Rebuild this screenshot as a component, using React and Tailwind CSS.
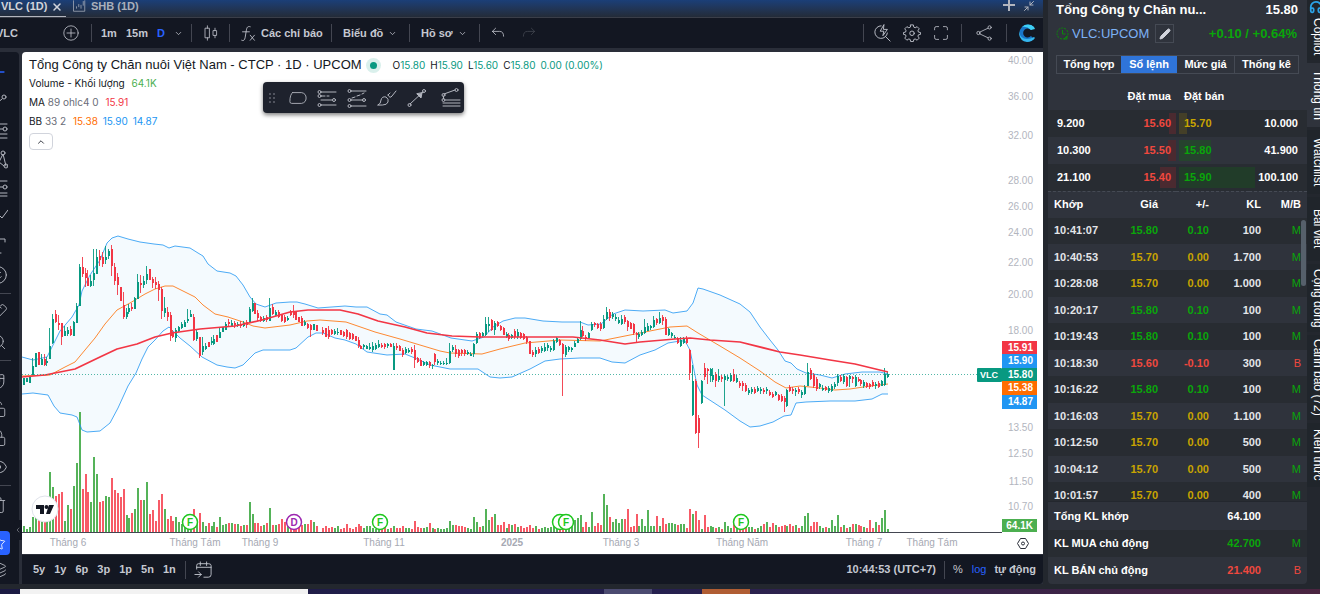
import React from 'react';
import {
  ChevronDown, ChevronUp, ChevronLeft, X, Pencil, Star, Layers, Trash2, Search,
  Ruler, Magnet, LockOpen, Smile, Eye, Lock, Minus, Minimize2, Headphones,
} from 'lucide-react';

const UP = '#089981';
const DOWN = '#f23645';

// each bar: [up, bodyTop, bodyBottom] or [up, high, bodyTop, bodyBottom, low]
const segments = [
  {
    x: 24,
    step: 2.93,
    bars: [
      [1, 378, 385], [1, 378, 382], [1, 376, 383], [1, 358, 366, 375, 375], [1, 353, 367], [0, 352, 365], [1, 354, 359, 365, 365],
      [0, 354, 359, 365, 366], [1, 357, 361, 363, 366], [1, 328, 346, 359, 359], [1, 314, 319, 343, 344], [0, 310, 314, 322, 323],
      [0, 315, 323, 325, 330], [0, 323, 323, 337, 345], [1, 326, 331, 336, 336], [1, 327, 330, 334, 336], [0, 326, 329, 335, 336],
      [1, 321, 322, 336, 336], [1, 303, 306, 323, 323], [1, 264, 267, 306, 306], [0, 257, 267, 274, 277], [0, 268, 273, 278, 287],
      [0, 270, 278, 286, 286], [1, 275, 281, 286, 287], [1, 249, 273, 280, 286], [1, 249, 257, 274, 274], [0, 250, 256, 260, 266],
      [0, 252, 257, 264, 267], [1, 246, 257, 260, 264], [1, 249, 251, 256, 259], [0, 245, 249, 266, 276], [0, 263, 267, 281, 285],
      [0, 273, 277, 285, 295], [0, 287, 301], [0, 292, 305, 317, 319], [1, 308, 312, 317, 319], [1, 304, 308, 312, 314],
      [0, 303, 307, 309, 311], [1, 297, 298, 309, 309], [1, 274, 282, 299, 299], [0, 275, 283, 285, 293], [1, 276, 281, 285, 288],
      [1, 266, 274, 280, 284], [0, 269, 280], [0, 277, 279, 283, 288], [0, 277, 282, 285, 289], [0, 281, 284, 290, 301],
      [0, 287, 289, 311, 319], [1, 297, 308, 313, 317], [0, 307, 312, 317, 321], [0, 312, 315, 336, 341], [0, 330, 332, 337, 338],
      [1, 328, 330, 338, 342], [1, 326, 327, 331, 332], [1, 322, 324, 328, 329], [1, 320, 322, 327, 327], [1, 309, 319, 321, 323],
      [1, 310, 314, 317, 317], [0, 314, 317, 340, 341], [1, 330, 332, 339, 341], [0, 337, 337, 356, 358], [1, 337, 346, 352, 355],
      [1, 343, 346, 349, 350], [0, 342, 347], [1, 337, 341, 343, 345], [1, 335, 339, 344, 345], [0, 335, 342], [1, 327, 332, 338, 338],
      [1, 327, 332], [1, 322, 324, 330, 330], [0, 319, 322, 324, 327], [1, 320, 323, 326, 326], [0, 321, 323, 325, 328],
      [1, 322, 324, 326, 327], [0, 321, 324, 326, 328], [1, 321, 323, 326, 327], [0, 320, 322, 325, 328], [1, 307, 309, 323, 323],
      [1, 298, 303, 311, 312], [0, 303, 314], [0, 310, 313, 318, 321], [0, 316, 317, 321, 322], [1, 316, 318, 321, 322],
      [0, 315, 317, 320, 322], [1, 298, 308, 321, 321], [0, 304, 307, 314, 315], [1, 310, 312, 315, 316], [0, 310, 312, 317, 318],
      [0, 314, 315, 321, 322], [0, 315, 317, 322, 323], [1, 316, 318, 320, 321], [0, 310, 311, 315, 316], [0, 305, 311, 315, 318],
      [0, 312, 320], [0, 317, 322], [0, 316, 318, 326, 326], [1, 320, 322, 325, 326], [0, 323, 324, 328, 329], [0, 324, 325, 330, 337],
      [1, 324, 330], [0, 325, 331],
    ],
    volume: [6, 3, 5, 15, 20, 22, 20, 25, 27, 60, 45, 36, 38, 40, 11, 27, 23, 46, 69, 120, 43, 58, 40, 30, 75, 58, 30, 31, 36, 35, 54, 42,
      39, 35, 43, 17, 14, 19, 23, 44, 32, 32, 50, 18, 22, 11, 32, 38, 23, 13, 16, 11, 15, 10, 8, 10, 10, 12, 23, 12, 19, 10, 6, 9, 6, 10,
      5, 15, 7, 8, 9, 9, 8, 8, 6, 7, 7, 30, 18, 9, 9, 6, 7, 9, 24, 7, 7, 8, 13, 10, 10, 8, 12, 10, 9, 7, 8, 8, 12, 10, 6],
  },
  {
    x: 323,
    step: 2.96,
    bars: [
      [0, 327, 330, 333, 335], [0, 328, 337], [0, 326, 330, 337, 339], [0, 329, 330, 334, 335], [1, 329, 331, 334, 335],
      [1, 328, 332, 333, 335], [0, 330, 335], [0, 331, 332, 336, 337], [0, 329, 330, 337, 339], [0, 332, 333, 339, 340],
      [0, 333, 334, 339, 340], [0, 336, 341], [0, 337, 340, 346, 348], [0, 345, 346, 349, 349], [1, 344, 345, 347, 349],
      [1, 345, 346, 349, 349], [1, 343, 347, 349, 350], [1, 342, 346, 350, 352], [1, 343, 345, 349, 350], [1, 340, 344, 347, 348],
      [0, 343, 345, 347, 348], [0, 343, 344, 347, 349], [1, 343, 344, 346, 348], [0, 343, 344, 347, 347], [1, 343, 346, 370, 370],
      [0, 343, 346, 348, 350], [0, 345, 346, 351, 351], [0, 348, 350, 355, 357], [1, 347, 349, 353, 354], [1, 348, 350, 352, 353],
      [0, 347, 349, 352, 354], [0, 345, 350, 360, 368], [0, 357, 358, 362, 363], [0, 358, 360, 366, 366], [1, 361, 362, 365, 366],
      [1, 361, 362, 365, 366], [0, 361, 362, 366, 368], [1, 364, 365, 366, 369], [0, 353, 354, 362, 365], [1, 359, 361, 363, 365],
      [1, 361, 363, 364, 365], [1, 361, 363, 364, 365], [1, 358, 363, 364, 365], [1, 343, 351, 363, 364], [1, 345, 347, 350, 352],
      [0, 345, 349, 354, 357], [0, 349, 350, 356, 358], [0, 349, 350, 353, 356], [0, 349, 350, 354, 356], [1, 350, 352, 354, 355],
      [1, 352, 354, 356, 356], [1, 343, 344, 354, 357], [1, 332, 334, 343, 344], [0, 332, 333, 338, 339], [1, 332, 333, 336, 337],
      [1, 317, 324, 335, 336], [1, 317, 324, 326, 332], [0, 319, 320, 330, 331], [1, 321, 323, 330, 335], [0, 321, 322, 326, 327],
      [0, 325, 326, 330, 331], [0, 327, 328, 335, 335], [1, 332, 334, 337, 338], [0, 333, 335, 339, 341], [1, 334, 335, 338, 339],
      [0, 329, 331, 337, 339], [1, 329, 332, 337, 339], [0, 332, 333, 338, 339], [0, 333, 334, 339, 340], [0, 336, 337, 342, 344],
      [0, 341, 354], [0, 350, 352, 355, 357], [1, 347, 350, 354, 357], [0, 347, 349, 353, 354], [1, 346, 348, 351, 353],
      [1, 343, 347, 351, 352], [1, 343, 345, 348, 351], [1, 346, 348, 350, 352], [1, 339, 341, 350, 351], [1, 337, 338, 342, 343],
      [0, 339, 340, 345, 346], [0, 343, 344, 354, 396], [1, 345, 347, 355, 357], [1, 346, 347, 350, 352], [1, 347, 348, 350, 352],
      [1, 341, 343, 347, 347], [1, 337, 339, 343, 343], [1, 321, 330, 339, 340], [0, 326, 331, 336, 337], [0, 335, 337, 339, 341],
      [1, 332, 333, 338, 339], [1, 322, 324, 330, 331], [0, 322, 323, 325, 327], [0, 323, 324, 328, 329],
    ],
    volume: [4, 6, 4, 5, 4, 6, 3, 4, 8, 4, 3, 5, 8, 6, 4, 6, 6, 4, 3, 5, 4, 5, 3, 4, 6, 4, 4, 6, 4, 4, 3, 11, 5, 4, 4, 5, 9, 4, 3, 4, 3, 3, 4,
      11, 7, 7, 6, 6, 5, 4, 3, 15, 10, 5, 6, 23, 12, 15, 18, 7, 7, 10, 4, 8, 7, 8, 5, 6, 4, 5, 7, 4, 6, 3, 4, 5, 4, 5, 6, 4, 7, 10, 6, 5,
      8, 12, 14, 17, 5, 10, 5, 20, 6, 9],
  },
  {
    x: 601,
    step: 2.96,
    bars: [
      [0, 322, 324, 329, 331], [1, 315, 319, 328, 329], [1, 307, 312, 319, 320], [0, 309, 312, 318, 321], [1, 312, 314, 317, 319],
      [1, 314, 317, 319, 321], [1, 317, 320, 323, 324], [1, 315, 319, 324, 325], [0, 315, 317, 322, 324], [0, 320, 321, 327, 331],
      [0, 322, 323, 329, 329], [0, 323, 324, 333, 335], [0, 332, 333, 335, 342], [1, 332, 334, 337, 339], [1, 330, 332, 335, 336],
      [1, 319, 327, 333, 334], [1, 323, 326, 331, 331], [1, 325, 326, 328, 330], [1, 316, 320, 327, 328], [0, 318, 319, 323, 325],
      [1, 312, 318, 323, 324], [0, 315, 317, 321, 325], [0, 317, 319, 335, 335], [1, 328, 329, 335, 336], [1, 332, 333, 336, 338],
      [1, 335, 337, 338, 339], [0, 337, 339, 343, 344], [1, 337, 340, 346, 347], [1, 337, 339, 343, 344], [0, 336, 338, 343, 344],
      [0, 349, 350, 373, 380], [1, 365, 381, 415, 416], [0, 379, 381, 433, 434], [0, 415, 418, 433, 448], [1, 380, 381, 403, 404],
      [0, 363, 368, 377, 380], [0, 368, 369, 371, 384], [1, 368, 369, 376, 382], [1, 368, 375, 380, 382], [0, 372, 374, 381, 387],
      [1, 369, 376, 380, 382], [0, 375, 377, 379, 382], [1, 374, 376, 380, 406], [1, 375, 377, 379, 381], [1, 373, 375, 381, 382],
      [0, 369, 374, 381, 382], [1, 375, 378, 382, 383], [0, 381, 383, 386, 388], [0, 381, 383, 386, 391], [0, 383, 385, 391, 392],
      [1, 388, 390, 393, 395], [1, 387, 389, 392, 394], [0, 387, 389, 393, 394], [1, 386, 388, 391, 392], [1, 387, 389, 391, 394],
      [0, 388, 390, 392, 394], [1, 387, 389, 391, 394], [0, 390, 392, 395, 396], [0, 392, 394, 397, 398], [1, 391, 392, 395, 396],
      [0, 394, 395, 400, 401], [0, 394, 396, 401, 402], [0, 396, 398, 402, 412], [1, 389, 390, 406, 407], [0, 385, 387, 391, 392],
      [0, 387, 389, 391, 394], [1, 388, 390, 392, 396], [0, 387, 389, 392, 394], [1, 390, 392, 395, 398], [1, 385, 387, 394, 395],
      [1, 363, 372, 386, 386], [0, 368, 370, 379, 380], [0, 373, 375, 386, 388], [0, 377, 379, 389, 391], [1, 383, 384, 387, 389],
      [1, 385, 388, 390, 391], [0, 386, 387, 390, 391], [1, 386, 388, 391, 393], [1, 384, 386, 391, 392], [1, 382, 384, 387, 389],
      [1, 374, 376, 383, 386], [0, 375, 377, 381, 382], [1, 374, 376, 382, 384], [0, 376, 377, 386, 387], [1, 375, 376, 379, 387],
      [0, 376, 377, 379, 383], [1, 375, 377, 386, 387], [0, 377, 379, 381, 382], [0, 379, 380, 384, 386], [1, 380, 382, 386, 388],
      [0, 382, 383, 387, 388], [0, 383, 384, 387, 389], [0, 380, 382, 386, 387], [1, 382, 384, 386, 389], [0, 381, 383, 387, 388],
      [1, 380, 381, 386, 386], [1, 368, 374, 385, 386], [1, 372, 374, 377, 378],
    ],
    volume: [7, 38, 27, 15, 10, 13, 9, 13, 13, 23, 5, 6, 18, 6, 13, 6, 22, 6, 6, 16, 6, 14, 8, 9, 9, 8, 7, 8, 8, 4, 23, 18, 21, 12, 3, 17, 5,
      6, 5, 4, 5, 3, 10, 6, 4, 9, 5, 7, 4, 6, 5, 5, 3, 4, 6, 8, 10, 5, 9, 7, 5, 6, 7, 6, 8, 6, 7, 4, 6, 16, 19, 6, 10, 10, 6, 4, 5, 4, 12, 6,
      17, 5, 7, 4, 5, 8, 8, 7, 6, 5, 4, 12, 4, 10, 7, 14, 22, 3],
  },
];

const upper = '22,357 33,360 47,357 53,345 60,331 72,317 79,305 82,291 90,275 100,260 107,243 112,238 118,236 128,239 140,242 154,244 163,245 169,248 175,246 190,248 198,253 203,256 208,264 217,271 230,273 236,276 243,285 250,297 256,304 265,307 276,303 290,302 297,302 305,304 318,308 345,306 356,307 367,307 380,314 387,315 396,322 416,329 432,331 451,338 472,341 484,337 493,327 503,321 515,318 525,318 543,321 562,322 580,322 588,325 601,324 613,314 625,310 643,311 665,310 673,313 687,311 693,303 698,288 703,289 720,295 740,304 750,312 760,327 770,340 778,350 785,361 791,363 797,369 806,373 820,375 832,378 845,374 862,372 880,372 888,374';
const lower = '22,394 33,393 48,395 54,406 60,413 72,415 77,417 82,430 87,432 100,431 110,423 118,408 128,386 136,373 142,359 148,347 155,340 163,331 169,327 180,338 190,346 202,357 217,365 227,367 235,368 243,365 255,353 263,350 290,350 296,348 308,337 316,333 323,333 335,338 345,340 356,344 367,352 387,355 405,354 415,358 430,365 450,369 478,369 490,377 500,378 512,377 530,369 545,361 560,359 580,358 600,358 612,362 625,363 640,355 655,350 668,343 680,341 685,341 690,350 697,385 702,395 725,410 740,421 750,427 760,426 773,422 784,416 791,415 796,403 806,402 830,401 855,401 872,399 882,394 888,394';
const basis = '22,376 50,375 65,367 75,362 85,350 95,338 105,324 117,310 130,303 145,294 155,289 165,286 173,286 185,292 195,297 203,305 215,314 228,317 243,322 253,326 265,328 290,325 307,321 320,320 346,322 375,332 400,339 420,345 440,351 450,353 482,354 500,349 525,343 560,340 600,341 625,336 640,333 670,327 687,326 698,333 720,346 740,358 760,371 775,382 786,388 800,386 820,388 835,390 850,389 870,386 888,384';
const average = '22,377 45,375 75,369 100,357 117,349 137,344 155,337 172,333 200,329 235,326 262,320 290,312 308,310 340,310 358,314 378,321 405,327 427,333 452,336 480,337 512,337 540,337 573,337 600,340 625,344 640,342 675,339 690,338 710,340 740,342 780,352 800,355 830,360 855,364 888,372';
const bandArea = `${upper} ${lower.split(' ').reverse().join(' ')}`;

const priceTicks = [
  ['40.00', 60], ['36.00', 96], ['32.00', 135], ['28.00', 180], ['26.00', 206], ['24.00', 232], ['22.00', 262],
  ['20.00', 294], ['18.00', 330], ['13.50', 427], ['12.50', 453], ['11.50', 481], ['10.70', 506],
];
const priceTags = [
  ['15.91', 348, '#f23645'], ['15.90', 361, '#2196f3'], ['15.80', 375, '#089981'], ['15.38', 388, '#ff6d00'], ['14.87', 402, '#2196f3'],
];
const timeTicks = [
  ['Tháng 6', 68], ['Tháng Tám', 195], ['Tháng 9', 260], ['Tháng 11', 384], ['2025', 512], ['Tháng 3', 621],
  ['Tháng Năm', 742], ['Tháng 7', 864], ['Tháng Tám', 932],
];
const events = [['F', 190], ['D', 294], ['F', 380], ['', 560], ['F', 566], ['F', 741]];

function Chart() {
  return (
    <svg viewBox="22 52 1021 502" className="block w-full h-full" fontFamily='"Liberation Sans", Arial, sans-serif' role="img" aria-label="VLC 1D">
      <polygon points={bandArea} fill="#2196f3" fillOpacity="0.05" />
      {segments.map((seg) => seg.volume.map((v, i) => (
        <rect key={`v${seg.x}-${i}`} x={Math.round(seg.x + i * seg.step) - 1} y={532 - v} width="2" height={v}
          fill={seg.bars[i]?.[0] ? '#4caf50' : '#f7525f'} fillOpacity="0.95" />
      )))}
      <polyline points={upper} fill="none" stroke="#2196f3" strokeOpacity="0.8" strokeWidth="1" />
      <polyline points={lower} fill="none" stroke="#2196f3" strokeOpacity="0.8" strokeWidth="1" />
      <polyline points={basis} fill="none" stroke="#ff6d00" strokeOpacity="0.8" strokeWidth="1" />
      {segments.map((seg) => seg.bars.map((bar, i) => {
        const full = bar.length === 5;
        const top = full ? bar[2] : bar[1];
        const bottom = full ? bar[3] : bar[2];
        const high = bar[1];
        const low = full ? bar[4] : bottom;
        const x = Math.round(seg.x + i * seg.step);
        const color = bar[0] ? UP : DOWN;
        return (
          <g key={`c${seg.x}-${i}`} fill={color}>
            <rect x={x - 1} y={high} width="1" height={low - high} fillOpacity="0.9" />
            <rect x={x - 1} y={top} width="2" height={Math.max(bottom - top, 1)} />
          </g>
        );
      }))}
      <polyline points={average} fill="none" stroke={DOWN} strokeWidth="1.7" strokeLinejoin="round" />
      <line x1="22" x2="978" y1="374.5" y2="374.5" stroke={UP} strokeOpacity="0.7" strokeDasharray="1 2" />
      <line x1="22" x2="1002" y1="532.5" y2="532.5" stroke="#434651" />

      {events.map(([label, x]) => {
        const color = label === 'D' ? '#9c27b0' : '#1ec71e';
        return (
          <g key={x}>
            <circle cx={x} cy="522" r="7.5" fill="#fff" stroke={color} strokeWidth="1.5" />
            <text x={x} y="526" textAnchor="middle" fontSize="10" fontWeight="bold" fill={color}>{label}</text>
          </g>
        );
      })}

      <circle cx="45" cy="509" r="13" fill="#fff" stroke="#e0e3eb" />
      <path d="M36 505h8v9h-4v-5h-4zM49 505h5l-4 9h-4z" fill="#131722" />
      <circle cx="46.500" cy="507" r="2" fill="#131722" />

      {priceTicks.map(([label, y]) => (
        <text key={label} x="1033" y={y + 4} textAnchor="end" fontSize="10" fill="#b2b5be">{label}</text>
      ))}
      <rect x="977" y="368" width="25" height="14" rx="1" fill={UP} />
      <text x="989" y="378" textAnchor="middle" fontSize="9" fontWeight="bold" fill="#fff">VLC</text>
      {priceTags.map(([label, y, color]) => (
        <g key={label}>
          <rect x="1002" y={y - 7} width="35" height="14" fill={color} />
          <text x="1033" y={y + 3} textAnchor="end" fontSize="10" fontWeight="bold" fill="#fff">{label}</text>
        </g>
      ))}
      <rect x="1002" y="519" width="35" height="13" fill="#4caf50" />
      <text x="1033" y="529" textAnchor="end" fontSize="10" fontWeight="bold" fill="#fff">64.1K</text>
      {timeTicks.map(([label, x]) => (
        <text key={x} x={x} y="546" textAnchor="middle" fontSize="10" fontWeight={label === '2025' ? 'bold' : 'normal'} fill="#a6a9b3">{label}</text>
      ))}
      <path d="M1020.500 538.500h5l3 5-3 5h-5l-3-5z" fill="none" stroke="#2a2e39" strokeLinejoin="round" />
      <circle cx="1023" cy="543.500" r="1.500" fill="none" stroke="#2a2e39" />
    </svg>
  );
}

function Glyph({ d, size = 20, children }) {
  return (
    <svg width={size} height={size} viewBox="0 0 20 20" fill="none" stroke="currentColor" strokeLinecap="round" strokeLinejoin="round" className="shrink-0">
      {d && <path d={d} />}
      {children}
    </svg>
  );
}

function Sep() {
  return <span className="w-px h-[18px] shrink-0 bg-[#434651]" />;
}

const FibGlyph = () => (
  <Glyph d="M4 4h15M4 8h4M10 8h2M4 12h11M4 17h15">
    <circle cx="2.500" cy="4" r="1.500" /><circle cx="2.500" cy="8" r="1.500" /><circle cx="17" cy="12" r="1.500" /><circle cx="2.500" cy="17" r="1.500" />
  </Glyph>
);

function TabStrip() {
  return (
    <header className="flex h-[18px] shrink-0 items-start bg-gradient-to-b from-[#1b3f78] to-[#232b38] border-b border-[#3a3e49] text-[11px] leading-[12px] font-bold">
      <button className="flex h-[17px] w-[66px] items-start gap-1 border-b border-[#b2b5be] pl-px text-[#d1d4dc]">
        <span>VLC (1D)</span><X size={12} strokeWidth={3} className="mt-px" />
      </button>
      <button className="flex items-start gap-1 pl-1.5 text-[#a9afbb]">
        <Glyph size={15} d="M2 1v14h15V1M6 11v-2M9 9V6M12 11V7M15 7V2" /><span>SHB (1D)</span>
      </button>
      <span className="ml-auto flex items-start gap-2 pr-2 text-[#b2b5be]">
        <button aria-label="Thêm"><Plus /></button>
        <button aria-label="Thu nhỏ"><Minimize2 size={12} /></button>
      </span>
    </header>
  );
}

function Plus() {
  return (
    <svg width="12" height="11" viewBox="0 0 12 11" stroke="currentColor" strokeWidth="2">
      <path d="M6 0v11M0 5h12" />
    </svg>
  );
}

function TopBar() {
  return (
    <nav className="flex h-[30px] shrink-0 items-center bg-[#131722] text-[11px] font-bold text-[#c5c8d1]">
      <div className="flex w-[91px] items-center justify-between pr-3">
        <button className="-ml-1">VLC</button>
        <button aria-label="So sánh">
          <Glyph size={16} d="M10 5v10M5 10h10"><circle cx="10" cy="10" r="9" /></Glyph>
        </button>
      </div>
      <Sep />
      <div className="flex w-[99px] items-center justify-between pl-[9px] pr-2">
        <button>1m</button><button>15m</button><button className="text-[#2962ff]">D</button>
        <button aria-label="Khung thời gian"><ChevronDown size={9} /></button>
      </div>
      <Sep />
      <div className="flex w-[37px] justify-center">
        <button aria-label="Nến">
          <Glyph size={16} d="M3 4h5v12H3zM5.500 1v3M5.500 16v3M13 7h4v6h-4zM15 4v3M15 13v3" />
        </button>
      </div>
      <Sep />
      <button className="flex w-[101px] items-center gap-1 pl-2.5 whitespace-nowrap">
        <Glyph size={17} d="M12 2c-3-1-4 1-4.500 4L6 15c-.5 3-2 4-4 3M3 8h8M12 12l5 6M17 12l-5 6" /><span>Các chỉ báo</span>
      </button>
      <Sep />
      <button className="flex w-[77px] items-center justify-between pl-[11px] pr-3">Biểu đồ <ChevronDown size={9} /></button>
      <Sep />
      <button className="flex w-[69px] items-center justify-between pl-[11px] pr-3">Hồ sơ <ChevronDown size={9} /></button>
      <Sep />
      <button aria-label="Hoàn tác" className="pl-2.5"><Glyph size={16} d="M7 4L3 8l4 4M3 8h9q5 0 5 6" /></button>
      <button aria-label="Làm lại" className="pl-[15px] text-[#434651]"><Glyph size={16} d="M13 4l4 4-4 4M17 8H8q-5 0-5 6" /></button>
      <div className="ml-auto flex items-center">
        <Sep />
        <button aria-label="Tìm nhanh" className="ml-[9px]">
          <Glyph size={18} d="M9 2A7 7 0 1 0 16 10M14 14l5 5M12 1l-4 7h4l-1 5 5-7h-4z" />
        </button>
        <button aria-label="Cài đặt" className="ml-3">
          <Glyph size={18} d="M8.500 1h3l.5 2.500 1.500.7L15.700 3 18 5.300l-1.400 2.200.6 1.500 2.300.5v2l-2.300.5-.6 1.500L18 15.700 15.700 18l-2.200-1.400-1.500.6-.5 2.300h-3L8 17.200l-1.500-.6L4.300 18 2 15.700l1.400-2.200-.6-1.500L.5 11.500v-2L2.800 9l.6-1.500L2 5.300 4.300 3l2.200 1.200L8 3.500z">
            <circle cx="10" cy="10.300" r="2.500" />
          </Glyph>
        </button>
        <button aria-label="Toàn màn hình" className="ml-3">
          <Glyph size={16} d="M2 6V4q0-2 2-2h3M13 2h3q2 0 2 2v2M18 13v3q0 2-2 2h-3M7 18H4q-2 0-2-2v-3" />
        </button>
        <span className="w-3" /><Sep />
        <button aria-label="Chia sẻ" className="mx-3.5">
          <Glyph size={16} d="M4.500 9L15 4M4.500 11L15 16">
            <circle cx="3" cy="10" r="2" /><circle cx="17" cy="3" r="2" /><circle cx="17" cy="17" r="2" />
          </Glyph>
        </button>
        <Sep />
        <button aria-label="Copilot" className="ml-[11px] mr-[7px]">
          <svg width="18" height="18" viewBox="0 0 18 18">
            <path d="M16 3A8.500 8.500 0 1 0 16 15l-3-3a4.500 4.500 0 1 1 0-6z" fill="#1976c9" />
            <path d="M16 3A8.500 8.500 0 0 0 4 3q5-1 9 3l4-1z" fill="#3fd0f5" />
            <path d="M1 7q1 8 8 8 4 0 7-2l1 1q-3 4-8 4-7-1-8-8z" fill="#35b6ee" />
          </svg>
        </button>
      </div>
    </nav>
  );
}

const tools = [
  ['Con trỏ', <Minus size={20} className="text-[#2962ff]" />],
  ['Đường xu hướng', <Glyph d="M2 18L14 8"><circle cx="16" cy="6" r="2" /></Glyph>],
  ['Fibonacci', <Glyph d="M2 4h17M2 9h13M2 14h17M2 18h17"><circle cx="17" cy="9" r="2" /></Glyph>],
  ['Mô hình', <Glyph d="M2 16l9-3 4-8 3 12M11 13l5 4"><circle cx="15" cy="4" r="2" /><circle cx="18" cy="17" r="2" /></Glyph>],
  ['Dự báo', <Glyph d="M2 3h17M2 9h13M2 15h17M2 18h17"><circle cx="17" cy="9" r="2" /></Glyph>],
  ['Cọ vẽ', <Glyph d="M2 17q2-8 8-6 2 6-8 6zM12 9l2 2 6-8" />],
  ['Văn bản', <Glyph d="M3 5V3h14v3M10 3v14M7 17h6" />],
  ['Biểu tượng', <Smile size={20} strokeWidth={1.2} />],
  null,
  ['Thước đo', <Ruler size={19} strokeWidth={1.2} className="-scale-x-100" />],
  ['Phóng to', <Search size={18} strokeWidth={1.2} />],
  null,
  ['Nam châm', <Magnet size={18} strokeWidth={1.2} className="rotate-[135deg]" />],
  ['Giữ chế độ vẽ', <LockOpen size={18} strokeWidth={1.2} />],
  ['Khóa', <Lock size={18} strokeWidth={1.2} />],
  ['Ẩn', <Eye size={20} strokeWidth={1.2} />],
  null,
  ['Xóa', <Trash2 size={18} strokeWidth={1.2} />],
];

function ToolRail() {
  return (
    <aside className="flex w-[19px] shrink-0 flex-col overflow-hidden rounded-tr bg-[#131722] pt-[5px] text-[#b2b5be]">
      {tools.map((tool, i) => (tool ? (
        <button key={tool[0]} aria-label={tool[0]} className="-ml-3 flex h-[29px] w-5 shrink-0 items-center justify-center">{tool[1]}</button>
      ) : <hr key={i} className="my-1 mr-2 h-px shrink-0 border-0 bg-[#434651]" />))}
      <button aria-label="Yêu thích" className="mt-3 flex h-6 w-2.5 shrink-0 items-center justify-end rounded-r bg-[#2962ff] text-white">
        <Star size={16} strokeWidth={1.3} className="mr-1 shrink-0" />
      </button>
      <button aria-label="Lớp" className="-ml-3 flex h-[29px] w-5 shrink-0 items-center justify-center"><Layers size={18} strokeWidth={1.2} /></button>
    </aside>
  );
}

function Legend() {
  return (
    <div className="absolute left-[7px] top-[4px] font-['Inter','Liberation_Sans',sans-serif] text-[10px] leading-[19px] text-[#131722]">
      <div className="flex h-[18px] items-center">
        <h1 className="font-['Liberation_Sans',Arial,sans-serif] text-[13px] leading-[18px]">Tổng Công ty Chăn nuôi Việt Nam - CTCP · 1D · UPCOM</h1>
        <span className="ml-1 grid size-[15px] place-items-center rounded-full bg-[#089981]/15"><span className="size-[7px] rounded-full bg-[#089981]" /></span>
        <p className="ml-3 flex gap-[5px] text-[#089981]">
          {[['O', '15.80'], ['H', '15.90'], ['L', '15.60'], ['C', '15.80']].map(([k, v]) => (
            <span key={k}><span className="text-[#131722]">{k}</span>{v}</span>
          ))}
          <span>0.00 (0.00%)</span>
        </p>
      </div>
      <p>Volume - Khối lượng <span className="ml-1 text-[#4caf50]">64.1K</span></p>
      <p>MA <span className="text-[#6a6d78]">89 ohlc4 0</span> <span className="ml-1 text-[#f23645]">15.91</span></p>
      <p>BB <span className="text-[#6a6d78]">33 2</span> <span className="ml-1 text-[#ff6d00]">15.38</span> <span className="ml-0.5 text-[#2196f3]">15.90</span> <span className="ml-0.5 text-[#2196f3]">14.87</span></p>
      <button aria-label="Thu gọn" className="mt-0.5 grid h-[17px] w-6 place-items-center rounded-sm border border-[#d1d4dc] bg-white"><ChevronUp size={10} /></button>
    </div>
  );
}

function DrawingBar() {
  return (
    <div className="absolute left-[241px] top-[30px] flex h-[31px] w-[201px] items-center gap-2.5 rounded bg-[#1e222d] pl-1.5 text-[#b2b5be] shadow-[0_2px_4px_rgba(0,0,0,0.5)]">
      <span className="grid grid-cols-2 gap-[2px]">
        {Array.from({ length: 6 }, (_, i) => <span key={i} className="size-[2px] bg-[#50535e]" />)}
      </span>
      <button aria-label="Hình" className="ml-1"><Glyph d="M4 4h10q5 1 5 6t-5 6H3q-2 0-2-2 0-8 3-10z" size={18} /></button>
      <button aria-label="Fibonacci"><FibGlyph /></button>
      <button aria-label="Fibonacci mở rộng">
        <Glyph d="M4 3h15M4 12h12M4 18h15M5 10l3-1M10 8l3-1M15 6l2-1"><circle cx="2.500" cy="3" r="1.500" /><circle cx="2.500" cy="12" r="1.500" /><circle cx="17" cy="12" r="1.500" /><circle cx="2.500" cy="18" r="1.500" /></Glyph>
      </button>
      <button aria-label="Cọ"><Glyph d="M1 17q3-1 3-5 1-4 5-3 3 2 2 5-1 3-5 3zM11 7q2 4 4 1l4-5M11 7l2-2" /></button>
      <button aria-label="Mũi tên"><Glyph d="M3 16L16 4"><circle cx="2.500" cy="17" r="1.500" /><circle cx="17" cy="3" r="1.500" /><path d="M15 5l-1 5-4-4z" fill="currentColor" /></Glyph></button>
      <button aria-label="Quạt" className="ml-1"><Glyph d="M3 6L14 2M2.500 8v3M5 12h14M2 15h17M2 18h17"><circle cx="2.500" cy="7" r="1.500" /><circle cx="15.500" cy="2" r="1.500" /><circle cx="2.500" cy="12" r="1.500" /></Glyph></button>
    </div>
  );
}

function BottomBar() {
  return (
    <div className="flex h-[29px] shrink-0 items-center rounded-br bg-[#131722] pl-[11px] pr-[7px] text-[11px] font-bold text-[#c5c8d1]">
      <div className="flex gap-[9px]">
        {['5y', '1y', '6p', '3p', '1p', '5n', '1n'].map((r) => <button key={r}>{r}</button>)}
      </div>
      <span className="w-[9px]" /><Sep />
      <button aria-label="Đi đến ngày" className="ml-2"><Glyph size={18} d="M3 9V5q0-2 2-2h11q3 0 3 2v10q0 3-3 3h-5M3 7h16M7 1v4M14 1v4M1 15h7M5 12l3 3-3 3" /></button>
      <span className="ml-auto mr-2">10:44:53 (UTC+7)</span>
      <Sep />
      <button className="ml-2 font-normal">%</button>
      <button className="ml-[9px] font-normal text-[#2962ff]">log</button>
      <button className="ml-2">tự động</button>
    </div>
  );
}

const tone = { up: 'text-[#0aa60a]', ref: 'text-[#c8a400]', down: 'text-[#f0483e]' };

const book = [
  { bidVol: '9.200', bid: '15.60', bidBar: 7, ask: '15.70', askTone: 'ref', askBar: 8, askFill: 'bg-[#443f28]', askVol: '10.000' },
  { bidVol: '10.300', bid: '15.50', bidBar: 8, ask: '15.80', askTone: 'up', askBar: 32, askFill: 'bg-[#26432e]', askVol: '41.900' },
  { bidVol: '21.100', bid: '15.40', bidBar: 16, ask: '15.90', askTone: 'up', askBar: 76, askFill: 'bg-[#213c29]', askVol: '100.100' },
];

const trades = [
  ['10:41:07', '15.80', '0.10', '100', 'M'],
  ['10:40:53', '15.70', '0.00', '1.700', 'M'],
  ['10:28:08', '15.70', '0.00', '1.000', 'M'],
  ['10:20:17', '15.80', '0.10', '100', 'M'],
  ['10:19:43', '15.80', '0.10', '100', 'M'],
  ['10:18:30', '15.60', '-0.10', '300', 'B'],
  ['10:16:22', '15.80', '0.10', '100', 'M'],
  ['10:16:03', '15.70', '0.00', '1.100', 'M'],
  ['10:12:50', '15.70', '0.00', '500', 'M'],
  ['10:04:12', '15.70', '0.00', '500', 'M'],
  ['10:01:57', '15.70', '0.00', '400', 'M'],
];
const tradeTone = { '0.10': tone.up, '0.00': tone.ref, '-0.10': tone.down };

function QuotePanel() {
  return (
    <section className="flex w-[259px] shrink-0 flex-col rounded-b bg-[#2f333c] text-[11px] font-bold text-white">
      <div className="flex h-[20px] items-center justify-between pl-2 pr-[9px] text-[13px] whitespace-nowrap">
        <h2 className="leading-[18px]">Tổng Công ty Chăn nu...</h2>
        <span>15.80</span>
      </div>
      <div className="flex h-[27px] items-center pl-2 pr-[10px] text-[13px]">
        <svg width="13" height="13" viewBox="0 0 13 13" fill="none" stroke="#0b8a0b" className="mr-[3px]">
          <circle cx="6.500" cy="6.500" r="5.500" strokeDasharray="2 1" /><path d="M6.500 3v4h3M8 12l3-3v3z" />
        </svg>
        <a href="#vlc" className="font-normal text-[#7db1f5]">VLC:UPCOM</a>
        <button aria-label="Sửa" className="ml-[6px] grid size-[19px] place-items-center border border-[#454a54]"><Pencil size={12} className="fill-[#d1d4dc] text-[#d1d4dc]" /></button>
        <span className="ml-auto text-[#0aa60a]">+0.10 / +0.64%</span>
      </div>
      <div className="mx-2 mt-2 flex h-[19px] shrink-0 border border-[#454a54]">
        <button className="w-[64px]">Tổng hợp</button>
        <button className="w-[56px] bg-[#2f74d8]">Sổ lệnh</button>
        <button className="w-[57px]">Mức giá</button>
        <button className="flex-1 border-l border-[#454a54]">Thống kê</button>
      </div>

      <table className="mt-[9px] w-full table-fixed border-b border-dashed border-[#454a54]">
        <thead>
          <tr className="h-[27px]">
            <th className="w-[72px]" />
            <th className="w-[56px] pr-[5px] text-right whitespace-nowrap">Đặt mua</th>
            <th className="pl-2 text-left">Đặt bán</th>
            <th className="w-[58px]" />
          </tr>
        </thead>
        <tbody>
          {book.map((row) => (
            <tr key={row.bidVol} className="h-[27px] odd:bg-[#282c32]">
              <td className="pl-[9px]">{row.bidVol}</td>
              <td className={`relative pr-[5px] text-right ${tone.down}`}>
                <span className="absolute right-0 top-[3px] h-[21px] bg-[#4a2a30]" style={{ width: row.bidBar }} />
                <span className="relative">{row.bid}</span>
              </td>
              <td className={`relative pl-2 ${tone[row.askTone]}`}>
                <span className={`absolute left-[3px] top-[3px] h-[21px] ${row.askFill}`} style={{ width: row.askBar }} />
                <span className="relative">{row.ask}</span>
              </td>
              <td className="pr-[9px] text-right">{row.askVol}</td>
            </tr>
          ))}
        </tbody>
      </table>

      <div className="relative h-[310px] overflow-hidden border-b border-[#23272e] text-[#e3e5e9]">
        <table className="h-[317px] w-full table-fixed">
          <thead>
            <tr className="h-[26px] text-white">
              <th className="w-[70px] pl-[6px] text-left">Khớp</th>
              <th className="w-[40px] text-right">Giá</th>
              <th className="w-[51px] text-right">+/-</th>
              <th className="w-[52px] text-right">KL</th>
              <th className="pr-[6px] text-right">M/B</th>
            </tr>
          </thead>
          <tbody>
            {trades.map(([time, price, change, vol, side]) => (
              <tr key={time} className="odd:bg-[#282c32]">
                <td className="pl-[6px]">{time}</td>
                <td className={`text-right ${tradeTone[change]}`}>{price}</td>
                <td className={`text-right ${tradeTone[change]}`}>{change}</td>
                <td className="text-right">{vol}</td>
                <td className={`pr-[6px] text-right font-normal ${side === 'M' ? tone.up : tone.down}`}>{side}</td>
              </tr>
            ))}
          </tbody>
        </table>
        <span className="absolute right-px top-7 h-[66px] w-[5px] rounded bg-[#56606b]" />
      </div>

      <table className="mt-px w-full table-fixed">
        <tbody>
          {[['Tổng KL khớp', '64.100', '', ''], ['KL MUA chủ động', '42.700', 'M', tone.up], ['KL BÁN chủ động', '21.400', 'B', tone.down]].map(([label, vol, side, color]) => (
            <tr key={label} className="h-[27px] even:bg-[#282c32]">
              <th className="w-[150px] pl-[6px] text-left">{label}</th>
              <td className={`w-[63px] text-right ${color}`}>{vol}</td>
              <td className={`pr-[6px] text-right font-normal ${color}`}>{side}</td>
            </tr>
          ))}
        </tbody>
      </table>
    </section>
  );
}

const sideTabs = [
  ['Thông tin', 'h-[64px] bg-[#2f333c]'], ['Watchlist', 'h-[64px] bg-[#20252b]'], ['Bài viết', 'h-[64px] bg-[#20252b]'],
  ['Cộng đồng', 'h-[68px] bg-[#20252b]'], ['Cảnh báo (72)', 'h-[85px] bg-[#20252b]'], ['Kiến thức', 'h-[64px] bg-[#20252b]'],
];

function SideTabs() {
  return (
    <aside className="flex w-[13px] shrink-0 flex-col gap-[3px] overflow-hidden text-[12px] leading-[18px] text-white">
      <button className="flex h-[60px] shrink-0 flex-col items-start gap-1 bg-[#20252b] pl-0.5">
        <Headphones size={14} strokeWidth={3} className="shrink-0 text-[#2ba4e8]" /><span className="[writing-mode:vertical-rl]">Copilot</span>
      </button>
      {sideTabs.map(([label, style]) => (
        <button key={label} className={`flex shrink-0 items-center pl-0.5 whitespace-nowrap ${style}`}>
          <span className="[writing-mode:vertical-rl]">{label}</span>
        </button>
      ))}
    </aside>
  );
}

export default function App() {
  return (
    <div className="flex h-screen flex-col overflow-hidden bg-[#23272e] font-['Liberation_Sans',Arial,sans-serif]">
      <div className="flex h-[584px] shrink-0">
        <main className="flex min-w-0 flex-1 flex-col">
          <TabStrip />
          <TopBar />
          <div className="flex flex-1 bg-[#2a2e39] pt-1">
            <ToolRail />
            <div className="relative ml-[3px] flex min-w-0 flex-1 flex-col">
              <div className="relative flex-1 overflow-hidden rounded-tl bg-white">
                <Chart />
                <Legend />
                <DrawingBar />
              </div>
              <div className="mt-px"><BottomBar /></div>
              <button aria-label="Ẩn thanh công cụ" className="absolute -left-2 top-[468px] grid h-5 w-2 place-items-center rounded-l bg-[#131722] text-[#868993]"><ChevronLeft size={8} /></button>
            </div>
          </div>
        </main>
        <span className="w-[5px] shrink-0" />
        <QuotePanel />
        <SideTabs />
      </div>
      <footer className="mt-[5px] flex h-[5px] bg-gradient-to-r from-[#1b1a42] via-[#25204f] to-[#4a2440]">
        <span className="ml-5 w-[288px] bg-[#f2f2f2]" />
        <span className="ml-[296px] w-12 bg-[#4b4a70]" />
        <span className="ml-[50px] w-12 bg-[#b05d33]" />
      </footer>
    </div>
  );
}
